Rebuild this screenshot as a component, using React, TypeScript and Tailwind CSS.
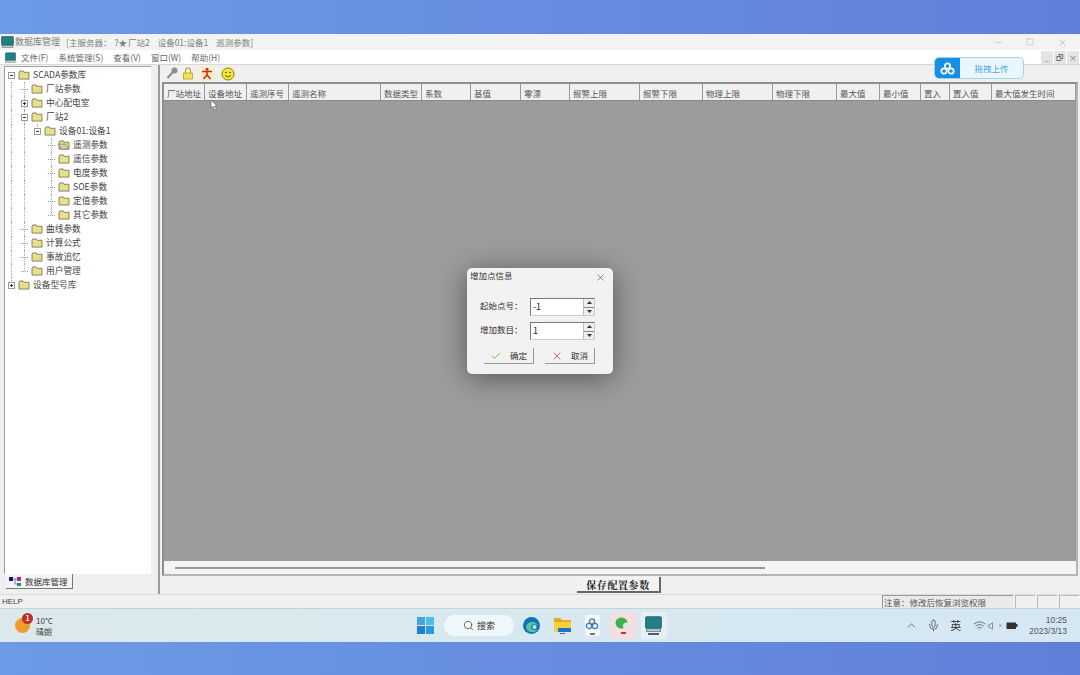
import { Check, ChevronUp, Mic, Minus, Search, Square, Volume, Wifi, X } from "lucide-react";

const COLUMNS: [string, number][] = [
  ["厂站地址", 41],
  ["设备地址", 42],
  ["遥测序号", 42],
  ["遥测名称", 92],
  ["数据类型", 41],
  ["系数", 49],
  ["基值", 50],
  ["零漂", 49],
  ["报警上限", 70],
  ["报警下限", 63],
  ["物理上限", 70],
  ["物理下限", 64],
  ["最大值", 43],
  ["最小值", 41],
  ["置入", 29],
  ["置入值", 42],
  ["最大值发生时间", 84],
];

type Node = {
  label: string;
  level: number;
  toggle?: "+" | "-";
  open?: boolean;
  guides?: number[]; // full height tree lines
  ends?: number[]; // tree lines that stop at this row
};

const TREE: Node[] = [
  { label: "SCADA参数库", level: 0, toggle: "-" },
  { label: "厂站参数", level: 1, guides: [0, 1] },
  { label: "中心配电室", level: 1, toggle: "+", guides: [0, 1] },
  { label: "厂站2", level: 1, toggle: "-", guides: [0, 1] },
  { label: "设备01:设备1", level: 2, toggle: "-", guides: [0, 1], ends: [2] },
  { label: "遥测参数", level: 3, open: true, guides: [0, 1, 3] },
  { label: "遥信参数", level: 3, guides: [0, 1, 3] },
  { label: "电度参数", level: 3, guides: [0, 1, 3] },
  { label: "SOE参数", level: 3, guides: [0, 1, 3] },
  { label: "定值参数", level: 3, guides: [0, 1, 3] },
  { label: "其它参数", level: 3, guides: [0, 1], ends: [3] },
  { label: "曲线参数", level: 1, guides: [0, 1] },
  { label: "计算公式", level: 1, guides: [0, 1] },
  { label: "事故追忆", level: 1, guides: [0, 1] },
  { label: "用户管理", level: 1, guides: [0], ends: [1] },
  { label: "设备型号库", level: 0, toggle: "+", ends: [0] },
];

const INDENT = ["pl-[3px]", "pl-[16px]", "pl-[29px]", "pl-[43px]"];
const GUIDE_X = ["left-[6px]", "left-[19px]", "left-[32px]", "left-[46px]"];
const FONT = "font-['Noto_Sans_CJK_SC','Noto_Sans',sans-serif]";

function Folder({ open }: { open?: boolean }) {
  return (
    <svg width="12" height="10" viewBox="0 0 13 11" className="shrink-0 relative bg-white">
      <path d="M1 2.5 L2 1 H5.5 L6.5 2.5 H12 V10 H1 Z" fill="#e8df8a" stroke="#6f6f50" strokeWidth="0.9" />
      {open && <path d="M0.5 4.5 H8 L12 10 H3 Z" fill="#cfcfa8" stroke="#66664f" strokeWidth="0.6" />}
    </svg>
  );
}

function Toggle({ sign }: { sign?: "+" | "-" }) {
  if (!sign) return <span className="w-[7px] h-0 shrink-0 border-t border-dotted border-[#999]" />;
  return (
    <span className="relative w-[7px] h-[7px] shrink-0 border border-[#999] bg-white">
      <span className="absolute left-[1px] top-[2px] w-[3px] h-px bg-[#333]" />
      {sign === "+" && <span className="absolute left-[2px] top-[1px] w-px h-[3px] bg-[#333]" />}
    </span>
  );
}

function AppIcon({ className }: { className: string }) {
  return (
    <svg viewBox="0 0 14 13" className={className}>
      <rect x="0.5" y="0.5" width="13" height="9.5" rx="1" fill="#1f7f86" stroke="#35565a" strokeWidth="0.7" />
      <rect x="1" y="10.5" width="12" height="2" fill="#bcd3d6" stroke="#35565a" strokeWidth="0.5" />
    </svg>
  );
}

function Spin({ value }: { value: string }) {
  return (
    <div className="flex w-[65px] h-[18px] bg-white border border-[#777] border-r-[#ccc] border-b-[#ccc] pl-[2px] items-center justify-between">
      <span className="text-[9px] text-[#222]">{value}</span>
      <div className="flex flex-col w-[11px] h-full bg-[#eee] border-l border-[#bbb]">
        <span className="flex-1 flex items-center justify-center border-b border-[#888]">
          <svg width="5" height="3" viewBox="0 0 5 3"><path d="M2.5 0 L5 3 H0 Z" fill="#333" /></svg>
        </span>
        <span className="flex-1 flex items-center justify-center">
          <svg width="5" height="3" viewBox="0 0 5 3"><path d="M2.5 3 L5 0 H0 Z" fill="#333" /></svg>
        </span>
      </div>
    </div>
  );
}

function Btn({ icon, label }: { icon: React.ReactNode; label: string }) {
  return (
    <div className="w-[50px] h-[16px] flex items-center justify-center gap-[8px] bg-[#f2f2f2] border-b border-r border-[#999] text-[8.5px] text-[#333]">
      {icon}
      <span>{label}</span>
    </div>
  );
}

export default function App() {
  return (
    <div className={`${FONT} relative w-[1080px] h-[675px] overflow-hidden flex flex-col bg-gradient-to-r from-[#6d9ae6] to-[#5f7fd8] text-[#444]`}>
      <div className="h-[34px] shrink-0" />

      {/* title bar */}
      <div className="h-[16px] shrink-0 bg-[#f2f3f2] flex items-center pl-[1px] text-[8.5px] text-[#808080]">
        <AppIcon className="w-[13px] h-[12px] mr-[1px]" />
        <span className="text-[9px]">数据库管理</span>
        <span className="ml-[6px]">[主服务器：</span>
        <span className="ml-[3px]">?★</span>
        <span className="ml-[1px]">厂站2</span>
        <span className="ml-[8px]">设备01:设备1</span>
        <span className="ml-[8px]">巡测参数]</span>
        <div className="ml-auto flex items-center gap-[23px] pr-[12px] text-[#888]">
          <Minus size={9} strokeWidth={1} />
          <Square size={8} strokeWidth={1} />
          <X size={11} strokeWidth={1} />
        </div>
      </div>

      {/* menu */}
      <div className="h-[15px] shrink-0 bg-white border-b border-[#d8d8d8] flex items-center pl-[5px] text-[8.5px] text-[#666]">
        <AppIcon className="w-[11px] h-[11px] mr-[5px]" />
        <div className="flex gap-[10px]">
          <span>文件(F)</span>
          <span>系统管理(S)</span>
          <span>查看(V)</span>
          <span>窗口(W)</span>
          <span>帮助(H)</span>
        </div>
        <div className="ml-auto flex gap-[1px] pr-[1px]">
          {["_", "🗗", "×"].map((c) => (
            <span key={c} className="w-[12px] h-[13px] bg-[#e4e4e4] text-[8px] leading-[13px] text-center text-[#777]">{c}</span>
          ))}
        </div>
      </div>

      {/* body */}
      <div className="flex-1 min-h-0 flex bg-[#efefef]">
        <div className="w-[160px] shrink-0 flex flex-col border-r-2 border-[#9a9a9a] pt-[1px]">
          <div className="ml-[4px] w-[147px] h-[508px] bg-white border-l border-t border-[#a0a0a0] pt-[1px]">
            {TREE.map((n) => (
              <div key={n.label} className={`relative h-[14px] flex items-center gap-[3px] text-[8.7px] text-[#444] ${INDENT[n.level]}`}>
                {n.guides?.map((g) => (
                  <span key={g} className={`absolute top-0 bottom-0 border-l border-dotted border-[#aaa] ${GUIDE_X[g]}`} />
                ))}
                {n.ends?.map((g) => (
                  <span key={g} className={`absolute top-0 h-[7px] border-l border-dotted border-[#aaa] ${GUIDE_X[g]}`} />
                ))}
                <Toggle sign={n.toggle} />
                <Folder open={n.open} />
                <span>{n.label}</span>
              </div>
            ))}
          </div>
          <div className="ml-[6px] w-[67px] h-[15px] flex items-center gap-[3px] pl-[3px] bg-[#f4f4f4] border-r border-b border-[#777] text-[8.5px] text-[#333]">
            <svg width="13" height="11" viewBox="0 0 13 11">
              <rect x="0" y="1" width="4" height="4" fill="#14148c" />
              <rect x="8" y="1" width="4" height="4" fill="#a02a9a" />
              <rect x="8" y="7" width="4" height="3" fill="#1a8a9a" />
              <path d="M4 3 H8 M6 3 V8 H8" stroke="#555" strokeWidth="0.7" fill="none" />
            </svg>
            <span>数据库管理</span>
          </div>
        </div>

        <div className="flex-1 min-w-0 flex flex-col">
          {/* toolbar */}
          <div className="h-[17px] shrink-0 flex items-center pl-[6px] bg-[#f0f0f0]">
            <svg width="12" height="13" viewBox="0 0 12 13">
              <circle cx="8.5" cy="3.5" r="3" fill="#8e8e8e" />
              <path d="M6.5 5.5 L1.5 11" stroke="#8e8e8e" strokeWidth="2.2" />
            </svg>
            <svg width="12" height="13" viewBox="0 0 12 13" className="ml-[4px]">
              <path d="M3.5 6 V3.5 a2.5 2.5 0 0 1 5 0 V6" fill="none" stroke="#b09a20" strokeWidth="1.1" />
              <rect x="1.5" y="6" width="9" height="6" fill="#f5e04a" stroke="#b09a20" strokeWidth="0.7" />
            </svg>
            <span className="w-[16px] h-[15px] ml-[5px] flex items-center justify-center bg-[#f5efcc]">
              <svg width="12" height="13" viewBox="0 0 12 13">
                <circle cx="6" cy="2.2" r="1.5" fill="#d42a10" />
                <path d="M1 4.5 H11 M6 4 V8 L2.5 12 M6 8 L9.5 12" stroke="#d42a10" strokeWidth="1.6" fill="none" />
              </svg>
            </span>
            <span className="w-[16px] h-[15px] ml-[5px] flex items-center justify-center bg-[#f0eeda]">
              <svg width="14" height="14" viewBox="0 0 14 14">
                <circle cx="7" cy="7" r="6" fill="#f6e82e" stroke="#6a6a10" strokeWidth="0.8" />
                <circle cx="5" cy="5.5" r="0.8" fill="#333" />
                <circle cx="9" cy="5.5" r="0.8" fill="#333" />
                <path d="M4 8.5 Q7 11.5 10 8.5" fill="none" stroke="#333" strokeWidth="0.8" />
              </svg>
            </span>
          </div>

          {/* grid */}
          <div className="ml-[2px] mr-[2px] h-[494px] shrink-0 flex flex-col border-2 border-[#8f8f8f] border-r-[#b5b5b5] border-b-[#b5b5b5]">
            <div className="h-[17px] shrink-0 flex bg-[#f0f0f0] border-b border-[#8a8a8a]">
              {COLUMNS.map(([name, w]) => (
                <div
                  key={name}
                  style={{ width: w }}
                  className="shrink-0 pl-[3px] border-r border-[#9a9a9a] text-[8.5px] leading-[18px] text-[#555] whitespace-nowrap overflow-hidden"
                >
                  {name}
                </div>
              ))}
            </div>
            <div className="flex-1 bg-[#9c9c9c]" />
            <div className="h-[13px] shrink-0 flex items-center pl-[11px] bg-[#f4f4f4]">
              <div className="w-[590px] h-[2px] bg-[#999]" />
            </div>
          </div>

          <div className="flex-1 flex justify-center pr-[2px] pt-[1px]">
            <div className="w-[84px] h-[16px] bg-[#f2f2f2] border-r-2 border-b-2 border-[#666] text-center text-[10px] leading-[15px] font-bold tracking-[0.6px] text-[#222] font-['Noto_Serif_CJK_SC','Noto_Sans_CJK_SC',serif]">
              保存配置参数
            </div>
          </div>
        </div>
      </div>

      {/* status */}
      <div className="h-[14px] shrink-0 bg-[#f0f0f0] border-t border-[#dcdcdc] flex items-center pl-[2px] text-[8px] leading-[14px] text-[#444]">
        <span className="font-['Liberation_Sans',sans-serif] pt-[1px]">HELP</span>
        <div className="ml-auto flex gap-[2px] pr-[1px] h-full">
          <span className="w-[131px] bg-[#eaeaea] border-t border-l border-[#999] pl-[1px] text-[8.5px] leading-[12px] text-[#555]">注意：修改后恢复浏览权限</span>
          <span className="w-[20px] border-t border-l border-[#bbb]" />
          <span className="w-[20px] border-t border-l border-[#bbb]" />
          <span className="w-[20px] border-t border-l border-[#bbb]" />
        </div>
      </div>

      {/* taskbar */}
      <div className="h-[34px] shrink-0 flex items-center bg-gradient-to-r from-[#dbe9ec] to-[#d4e7f3] border-t border-[#c5d4da] text-[#333]">
        <div className="relative ml-[15px] w-[18px] flex items-center h-full">
          <span className="w-[15px] h-[15px] rounded-full bg-[#ee9c2a]" />
          <span className="absolute left-[7px] top-[4px] w-[11px] h-[11px] rounded-full bg-[#c22e26] text-white text-[7px] leading-[11px] text-center font-bold">1</span>
        </div>
        <div className="ml-[3px] flex flex-col text-[8px] leading-[11px] text-[#444]">
          <span>10°C</span>
          <span>晴朗</span>
        </div>

        <svg width="17" height="17" viewBox="0 0 17 17" className="ml-[364px]">
          <rect x="0" y="0" width="8" height="8" fill="#3fa6e0" />
          <rect x="9" y="0" width="8" height="8" fill="#47c0ea" />
          <rect x="0" y="9" width="8" height="8" fill="#1f7fd0" />
          <rect x="9" y="9" width="8" height="8" fill="#2a9ae0" />
        </svg>
        <div className="ml-[10px] w-[70px] h-[21px] rounded-full bg-[#f0f7fa] flex items-center justify-center gap-[3px] text-[9px] text-[#333]">
          <Search size={11} strokeWidth={1.5} />
          <span>搜索</span>
        </div>
        <svg width="17" height="17" viewBox="0 0 17 17" className="ml-[9px]">
          <circle cx="8.5" cy="8.5" r="8.5" fill="#1473b8" />
          <path d="M3 10 C4 4 13 3 15 9 C14 7 8 6 8 10 C8 13 12 14 15 12 C12 17 4 16 3 10 Z" fill="#52c7a0" />
          <circle cx="11.5" cy="10" r="2" fill="#d4e7f0" />
        </svg>
        <div className="ml-[14px] flex flex-col items-center">
          <svg width="17" height="15" viewBox="0 0 17 15">
            <path d="M0 1 H6 L8 3 H17 V6 H0 Z" fill="#e8a820" />
            <rect x="0" y="5" width="17" height="10" fill="#f6cf3d" />
            <rect x="4" y="11" width="13" height="4" fill="#1a75c4" />
          </svg>
          <span className="w-[5px] h-[1.5px] mt-[1px] bg-[#666]" />
        </div>
        <div className="ml-[14px] w-[15px] h-[21px] flex flex-col items-center rounded-[3px] bg-[#f3f8fa]">
          <svg width="14" height="14" viewBox="0 0 14 14" className="mt-[2px]">
            <circle cx="4" cy="9" r="2.6" fill="none" stroke="#3d7ec0" strokeWidth="1.3" />
            <circle cx="10" cy="9" r="2.6" fill="none" stroke="#3d7ec0" strokeWidth="1.3" />
            <circle cx="7" cy="4.5" r="2.6" fill="none" stroke="#5a7090" strokeWidth="1.3" />
          </svg>
          <span className="w-[5px] h-[1.5px] mt-[2px] bg-[#777]" />
        </div>
        <div className="ml-[10px] w-[27px] h-[27px] flex flex-col items-center justify-center rounded-[3px] bg-[#f3dfe1]">
          <svg width="17" height="14" viewBox="0 0 17 14">
            <ellipse cx="6.5" cy="6" rx="6" ry="5.5" fill="#3cb34a" />
            <ellipse cx="12" cy="9" rx="4" ry="3.5" fill="#dfe8e0" />
          </svg>
          <span className="w-[5px] h-[2px] mt-[1px] bg-[#d02c2c]" />
        </div>
        <div className="ml-[4px] w-[26px] h-[27px] flex flex-col items-center justify-center rounded-[3px] bg-[#e6f1f6]">
          <AppIcon className="w-[17px] h-[16px]" />
          <span className="w-[11px] h-[2px] mt-[1px] bg-[#557]" />
        </div>

        <div className="ml-auto flex items-center text-[#333]">
          <ChevronUp size={13} strokeWidth={1.2} />
          <Mic size={13} strokeWidth={1.2} className="ml-[9px]" />
          <span className="ml-[10px] text-[11px]">英</span>
          <Wifi size={13} strokeWidth={1.2} className="ml-[12px]" />
          <span className="ml-[2px] flex items-center">
            <Volume size={10} strokeWidth={1.2} />
            <X size={5} strokeWidth={1.5} />
          </span>
          <svg width="12" height="9" viewBox="0 0 12 9" className="ml-[3px]">
            <rect x="0.5" y="1.5" width="9.5" height="6.5" fill="#333" />
            <rect x="10" y="3" width="1.5" height="3" fill="#333" />
          </svg>
          <div className="ml-[11px] mr-[13px] flex flex-col items-end text-[8.5px] leading-[11px] text-[#555] font-['Liberation_Sans',sans-serif]">
            <span>10:25</span>
            <span>2023/3/13</span>
          </div>
        </div>
      </div>

      <div className="h-[33px] shrink-0" />

      {/* floating upload widget */}
      <div className="absolute left-[934px] top-[57px] w-[90px] h-[22px] flex rounded-[5px] border border-[#9fd4ee] bg-[#eaf6fc] overflow-hidden">
        <div className="w-[25px] h-full flex items-center justify-center bg-[#1790e4]">
          <svg width="15" height="13" viewBox="0 0 15 13">
            <circle cx="4" cy="9" r="2.7" fill="none" stroke="#fff" strokeWidth="1.7" />
            <circle cx="11" cy="9" r="2.7" fill="none" stroke="#fff" strokeWidth="1.7" />
            <circle cx="7.5" cy="4" r="2.7" fill="none" stroke="#fff" strokeWidth="1.7" />
          </svg>
        </div>
        <span className="flex-1 text-center text-[8.5px] leading-[20px] text-[#4ba6d8]">拖拽上传</span>
      </div>

      {/* mouse cursor */}
      <svg width="8" height="11" viewBox="0 0 8 11" className="absolute left-[210px] top-[100px]">
        <path d="M1 0 V8 L3 6.5 L5 10 L6.5 9 L4.5 6 H7 Z" fill="#fff" stroke="#555" strokeWidth="0.6" />
      </svg>

      {/* dialog */}
      <div className="absolute left-[467px] top-[268px] w-[146px] h-[106px] rounded-[5px] bg-[#f2f2f2] shadow-[0_4px_28px_rgba(0,0,0,0.45)] flex flex-col text-[#333] text-[8.5px]">
        <div className="h-[15px] flex items-center justify-between pl-[3px] pr-[7px]">
          <span>增加点信息</span>
          <X size={11} strokeWidth={1.2} className="mt-[3px]" />
        </div>
        <div className="flex flex-col gap-[6px] mt-[15px] pl-[13px]">
          <div className="flex items-center">
            <span className="w-[50px] whitespace-nowrap pb-[3px]">起始点号：</span>
            <Spin value="-1" />
          </div>
          <div className="flex items-center">
            <span className="w-[50px] whitespace-nowrap pb-[3px]">增加数目：</span>
            <Spin value="1" />
          </div>
        </div>
        <div className="flex gap-[11px] mt-[8px] pl-[17px]">
          <Btn icon={<Check size={12} strokeWidth={2} className="text-[#7cc02e]" />} label="确定" />
          <Btn icon={<X size={12} strokeWidth={1.6} className="text-[#d83a3a]" />} label="取消" />
        </div>
      </div>
    </div>
  );
}
